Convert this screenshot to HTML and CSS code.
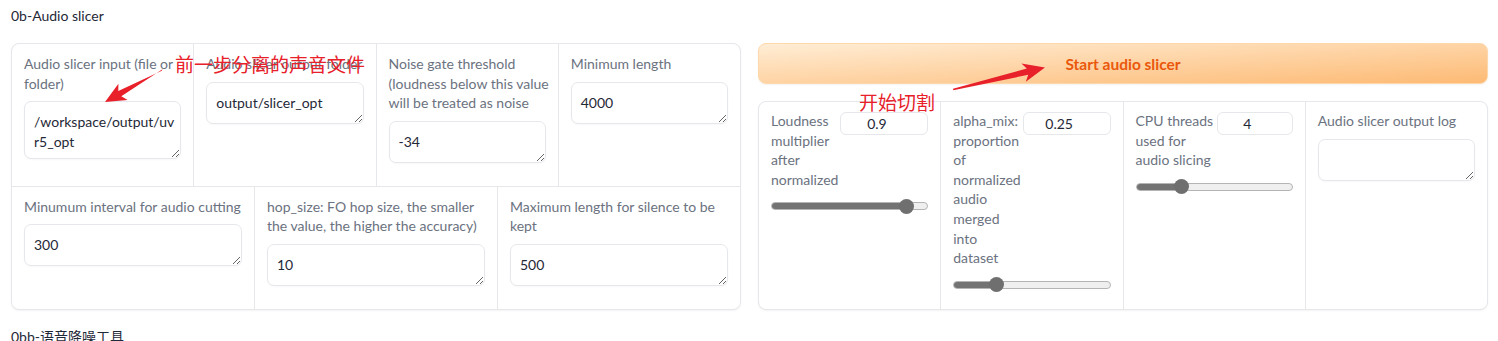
FILE: index.html
```html
<!DOCTYPE html>
<html lang="en">
<head>
<meta charset="utf-8">
<title>Audio slicer</title>
<link rel="stylesheet" href="styles.css">
</head>
<body>
<div class="page">
  <div class="section-title">0b-Audio slicer</div>
  <div class="columns">
    <div class="form left-form">
      <div class="form-row row-4">
        <div class="field">
          <label class="field-label">Audio slicer input (file or<br>folder)</label>
          <textarea class="textbox textbox-2">/workspace/output/uvr5_opt</textarea>
        </div>
        <div class="field">
          <label class="field-label">Audio slicer output folder</label>
          <textarea class="textbox">output/slicer_opt</textarea>
        </div>
        <div class="field">
          <label class="field-label">Noise gate threshold<br>(loudness below this value<br>will be treated as noise</label>
          <textarea class="textbox">-34</textarea>
        </div>
        <div class="field">
          <label class="field-label">Minimum length</label>
          <textarea class="textbox">4000</textarea>
        </div>
      </div>
      <div class="form-row row-3">
        <div class="field">
          <label class="field-label">Minumum interval for audio cutting</label>
          <textarea class="textbox">300</textarea>
        </div>
        <div class="field">
          <label class="field-label">hop_size: FO hop size, the smaller<br>the value, the higher the accuracy)</label>
          <textarea class="textbox">10</textarea>
        </div>
        <div class="field">
          <label class="field-label">Maximum length for silence to be<br>kept</label>
          <textarea class="textbox">500</textarea>
        </div>
      </div>
    </div>

    <div class="right-col">
      <button class="primary-btn">Start audio slicer</button>
      <div class="form right-form">
        <div class="form-row row-4">
          <div class="field slider-field">
            <div class="slider-head">
              <span class="field-label">Loudness<br>multiplier<br>after<br>normalized</span>
              <input type="number" class="num num-87" value="0.9">
            </div>
            <div class="slider" style="--v:0.9">
              <div class="slider-track"><div class="slider-fill"></div></div>
              <div class="slider-thumb"></div>
            </div>
          </div>
          <div class="field slider-field">
            <div class="slider-head">
              <span class="field-label">alpha_mix:<br>proportion<br>of<br>normalized<br>audio<br>merged<br>into<br>dataset</span>
              <input type="number" class="num num-88" value="0.25">
            </div>
            <div class="slider" style="--v:0.25">
              <div class="slider-track"><div class="slider-fill"></div></div>
              <div class="slider-thumb"></div>
            </div>
          </div>
          <div class="field slider-field">
            <div class="slider-head">
              <span class="field-label">CPU threads<br>used for<br>audio slicing</span>
              <input type="number" class="num num-76" value="4">
            </div>
            <div class="slider" style="--v:0.27">
              <div class="slider-track"><div class="slider-fill"></div></div>
              <div class="slider-thumb"></div>
            </div>
          </div>
          <div class="field">
            <label class="field-label">Audio slicer output log</label>
            <textarea class="textbox"></textarea>
          </div>
        </div>
      </div>
    </div>
  </div>
  <div class="section-title next-title">0bb-语音降噪工具</div>

  <div class="annotations">
    <span class="note note-1">前一步分离的声音文件</span>
    <span class="note note-2">开始切割</span>
    <svg class="arrows" width="1498" height="341" viewBox="0 0 1498 341" xmlns="http://www.w3.org/2000/svg">
      <polygon fill="#e8202a" points="162.5,69.3 121.3,96.3 127.6,100.1 105,102 118.4,83.7 118.3,91.1 161.8,70.7"/>
      <polygon fill="#e8202a" points="953,88.8 1026.8,68.6 1021.4,63.4 1045,67.5 1025.8,81.8 1028.2,74.8 953.3,90.2"/>
    </svg>
  </div>
</div>
</body>
</html>
```

FILE: styles.css
```css
* { box-sizing: border-box; }

html, body {
  margin: 0;
  padding: 0;
  background: #ffffff;
}

body {
  font-family: "Lato", "Noto Sans CJK SC", sans-serif;
  font-size: 14px;
  color: #1f2937;
}

.page {
  position: relative;
  padding: 6px 10px 0 11px;
}

.section-title {
  font-size: 14px;
  line-height: 20px;
  height: 20px;
  color: #1f2937;
  margin-bottom: 17px;
}

.next-title {
  margin-top: 17px;
  margin-bottom: 0;
}

.columns {
  display: grid;
  grid-template-columns: 730px 730px;
  column-gap: 17px;
}

.form {
  display: flex;
  flex-direction: column;
  gap: 1px;
  background: #e5e7eb;
  border: 1px solid #e5e7eb;
  border-radius: 8px;
  overflow: hidden;
  box-shadow: 0 1px 2px rgba(0, 0, 0, 0.05);
}

.form-row {
  display: grid;
  gap: 1px;
}

.row-4 { grid-template-columns: repeat(4, 1fr); }
.row-3 { grid-template-columns: repeat(3, 1fr); }

.field {
  background: #ffffff;
  padding: 10px 12px 23px;
  display: flex;
  flex-direction: column;
  align-items: stretch;
  min-width: 0;
}

.field-label {
  display: block;
  color: #6b7280;
  font-size: 14px;
  line-height: 19.6px;
  white-space: nowrap;
  margin-bottom: 8px;
}

.textbox {
  display: block;
  width: 100%;
  height: 42px;
  padding: 10px 3px 6px 9px;
  border: 1px solid #e5e7eb;
  border-radius: 7px;
  font-family: inherit;
  font-size: 14px;
  line-height: 19.5px;
  color: #1f2937;
  background: #ffffff;
  box-shadow: 0 1px 2px rgba(0, 0, 0, 0.03);
  overflow: hidden;
  outline: none;
}

.textbox-2 { height: 58px; }

/* right column */
.right-col {
  display: flex;
  flex-direction: column;
  gap: 17px;
}

.primary-btn {
  height: 41px;
  border: 1px solid #fed7aa;
  border-radius: 8px;
  background: linear-gradient(to bottom right, #ffedd5, #fdba74);
  color: #ea580c;
  font-family: inherit;
  font-size: 15.5px;
  font-weight: 700;
  box-shadow: 0 1px 2px rgba(0, 0, 0, 0.05);
  cursor: pointer;
}

.right-form { flex: 1; }
.right-form .form-row { flex: 1; }

.right-form .field {
  padding: 9px 12px 14px;
}

.slider-head {
  display: flex;
  align-items: flex-start;
  justify-content: space-between;
  gap: 2px;
}

.slider-head .field-label { margin-bottom: 0; }

.num {
  flex: none;
  height: 23px;
  margin-top: 1px;
  border: 1px solid #e5e7eb;
  border-radius: 6px;
  font-family: inherit;
  font-size: 14px;
  color: #1f2937;
  text-align: center;
  padding: 0 2px;
  background: #ffffff;
  outline: none;
}

.num-87 { width: 88px; }
.num-88 { width: 88px; }
.num-76 { width: 76px; }

.slider {
  position: relative;
  height: 16px;
  margin-top: 9px;
}

.slider-track {
  position: absolute;
  left: 0;
  right: 0;
  top: 4px;
  height: 8px;
  border-radius: 4px;
  background: #efefef;
  border: 1px solid #b4b4b4;
  overflow: hidden;
}

.slider-fill {
  height: 100%;
  width: calc(7.5px + var(--v) * (100% - 15px));
  background: #737373;
}

.slider-thumb {
  position: absolute;
  top: 0.5px;
  left: calc(var(--v) * (100% - 15px));
  width: 15px;
  height: 15px;
  border-radius: 50%;
  background: #6f6f6f;
}

/* annotations drawn over the screenshot */
.annotations {
  position: absolute;
  left: 0;
  top: 0;
  width: 1498px;
  height: 341px;
  pointer-events: none;
}

.note {
  position: absolute;
  font-family: "Noto Sans CJK SC", sans-serif;
  font-size: 19px;
  line-height: 19px;
  color: #e8202a;
  white-space: nowrap;
}

.note-1 { left: 175px; top: 54px; }
.note-2 { left: 859px; top: 92px; }

.arrows {
  position: absolute;
  left: 0;
  top: 0;
}
```
